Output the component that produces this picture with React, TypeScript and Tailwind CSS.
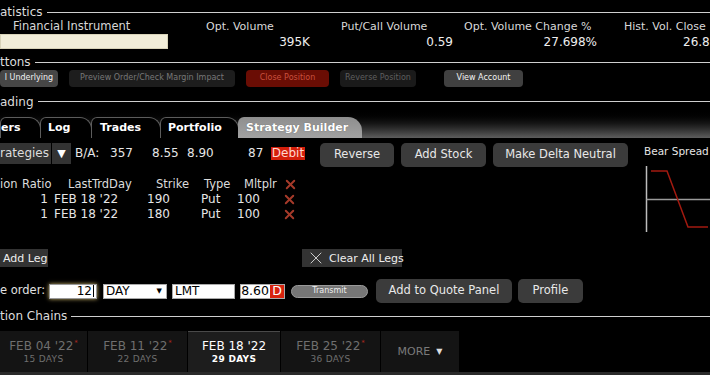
import { X } from 'lucide-react'

function SectionLine({ label }: { label: string }) {
  return (
    <div className="flex items-center h-[14px] text-[12px] text-[#dcdcdc]">
      <span className="whitespace-nowrap">{label}</span>
      <div className="flex-1 h-px bg-[#cfcfcf] ml-[4px]" />
    </div>
  )
}

const statCols = [
  { label: 'Opt. Volume', value: '395K', w: 'w-[147px]', lp: 'pl-[38px]', vp: 'pr-[5px] justify-end' },
  { label: 'Put/Call Volume', value: '0.59', w: 'w-[143px]', lp: 'pl-[26px]', vp: 'pr-[5px] justify-end' },
  { label: 'Opt. Volume Change %', value: '27.698%', w: 'w-[142px]', lp: 'pl-[6px]', vp: 'pr-[3px] justify-end' },
  { label: 'Hist. Vol. Close', value: '26.8', w: 'w-[130px]', lp: 'pl-[24px]', vp: 'pl-[83px]' },
]

const actionButtons = [
  { label: 'l Underlying', cls: 'w-[58px] bg-[#464646] text-[#f0f0f0]', ml: 'ml-0' },
  { label: 'Preview Order/Check Margin Impact', cls: 'w-[166px] bg-[#1d1d1d] text-[#777]', ml: 'ml-[11px]' },
  { label: 'Close Position', cls: 'w-[83px] bg-[#6a0d04] text-[#c9503e]', ml: 'ml-[11px]' },
  { label: 'Reverse Position', cls: 'w-[76px] bg-[#1a1a1a] text-[#5e5e5e]', ml: 'ml-[11px]' },
  { label: 'View Account', cls: 'w-[79px] bg-[#404040] text-[#f2f2f2]', ml: 'ml-[28px]' },
]

const tabs = [
  { label: 'ers', w: 'w-[41px]', pl: 'pl-0' },
  { label: 'Log', w: 'w-[52px]', pl: 'pl-[7px]' },
  { label: 'Trades', w: 'w-[70px]', pl: 'pl-[8px]' },
  { label: 'Portfolio', w: 'w-[79px]', pl: 'pl-[7px]' },
]

const legs = [
  { ratio: '1', day: "FEB 18 '22", strike: '190', type: 'Put', mult: '100' },
  { ratio: '1', day: "FEB 18 '22", strike: '180', type: 'Put', mult: '100' },
]

const expiries = [
  { date: "FEB 04 '22", days: '15 DAYS', w: 'w-[87px]', star: true },
  { date: "FEB 11 '22", days: '22 DAYS', w: 'w-[99px]', star: true },
  { date: "FEB 18 '22", days: '29 DAYS', w: 'w-[92px]', star: false, active: true },
  { date: "FEB 25 '22", days: '36 DAYS', w: 'w-[99px]', star: true },
]

const btn = 'h-[24px] rounded-[5px] bg-[#3b3b3b] flex items-center justify-center text-[11.5px] text-[#e8e8e8] whitespace-nowrap shrink-0'

function RedX() {
  return <X size={15} strokeWidth={3} className="text-[#a63a2a] shrink-0" />
}

export default function App() {
  return (
    <div className="w-[710px] h-[375px] bg-black overflow-hidden text-[#e2e2e2] text-[11px] leading-none flex flex-col font-['DejaVu_Sans','Liberation_Sans',sans-serif]">
      {/* statistics */}
      <div className="mt-[5px]">
        <SectionLine label="atistics" />
      </div>
      <div className="flex">
        <div className="w-[168px] shrink-0">
          <div className="h-[15px] flex items-center pl-[13px] text-[11.5px] text-[#d8d8d8] whitespace-nowrap">Financial Instrument</div>
          <div className="h-[15px] bg-[#f1edd8] border border-[#d8d3b8] mb-[1px]" />
        </div>
        {statCols.map((c) => (
          <div key={c.label} className={`${c.w} shrink-0`}>
            <div className={`h-[15px] flex items-center whitespace-nowrap text-[#d8d8d8] ${c.lp}`}>{c.label}</div>
            <div className={`h-[15px] flex items-center whitespace-nowrap text-[12px] text-[#eee] ${c.vp}`}>{c.value}</div>
          </div>
        ))}
      </div>

      {/* buttons */}
      <div className="mt-[5px]">
        <SectionLine label="ttons" />
      </div>
      <div className="flex mt-[1px] h-[17px]">
        {actionButtons.map((b) => (
          <div
            key={b.label}
            className={`${b.ml} ${b.cls} shrink-0 h-full rounded-[4px] flex items-center justify-center text-[8px] whitespace-nowrap`}
          >
            {b.label}
          </div>
        ))}
      </div>

      {/* trading */}
      <div className="mt-[8px]">
        <SectionLine label="ading" />
      </div>
      <div className="h-[29px] flex items-end bg-linear-to-b from-black via-[#161616] to-[#5e5e5e]">
        {tabs.map((t) => (
          <div
            key={t.label}
            className={`${t.w} ${t.pl} shrink-0 h-[21px] -mr-px bg-black border-t border-l border-r border-[#5c5c5c] rounded-tl-[6px] rounded-tr-[12px] flex items-center text-[11px] font-bold text-white`}
          >
            {t.label}
          </div>
        ))}
        <div className="w-[124px] shrink-0 h-[21px] bg-linear-to-b from-[#8e8e8e] to-[#a2a2a2] rounded-tl-[6px] rounded-tr-[14px] pl-[8px] flex items-center text-[11px] font-bold text-white [text-shadow:0_0_1px_#555]">
          Strategy Builder
        </div>
      </div>

      {/* strategy builder body */}
      <div className="flex h-[100px]">
        <div className="w-[642px] shrink-0">
          <div className="flex items-start mt-[5px] h-[24px]">
            <div className="w-[51px] shrink-0 h-[21px] bg-[#333] flex items-center text-[12px] text-[#ddd]">rategies</div>
            <div className="ml-[1px] shrink-0 w-[19px] h-[21px] bg-[#333] flex items-center justify-center text-[11px] text-white">▼</div>
            <div className="h-[21px] flex items-center text-[12px] text-[#e6e6e6] whitespace-nowrap shrink-0">
              <span className="w-[39px] pl-[4px]">B/A:</span>
              <span className="w-[42px]">357</span>
              <span className="w-[35px]">8.55</span>
              <span className="w-[61px]">8.90</span>
              <span className="w-[23px]">87</span>
              <span className="w-[34px] h-[13px] bg-[#d41f0b] text-[#ffd8d0] flex items-center justify-center">Debit</span>
            </div>
            <div className={`ml-[15px] w-[74px] ${btn}`}>Reverse</div>
            <div className={`ml-[7px] w-[85px] ${btn}`}>Add Stock</div>
            <div className={`ml-[7px] w-[135px] ${btn}`}>Make Delta Neutral</div>
          </div>

          <div className="mt-[11px] flex items-center h-[14px] text-[11.5px] text-[#dcdcdc] whitespace-nowrap">
            <span className="w-[20px] shrink-0">ion</span>
            <span className="w-[48px] shrink-0 pl-[2px]">Ratio</span>
            <span className="w-[88px] shrink-0">LastTrdDay</span>
            <span className="w-[48px] shrink-0">Strike</span>
            <span className="w-[40px] shrink-0">Type</span>
            <span className="w-[41px] shrink-0">Mltplr</span>
            <span className="w-[10px] flex justify-center"><RedX /></span>
          </div>
          {legs.map((l) => (
            <div key={l.strike} className="flex items-center h-[15px] text-[12px] text-[#e6e6e6] whitespace-nowrap">
              <span className="w-[48px] shrink-0 text-right">{l.ratio}</span>
              <span className="w-[99px] shrink-0 pl-[6px]">{l.day}</span>
              <span className="w-[54px] shrink-0">{l.strike}</span>
              <span className="w-[36px] shrink-0">{l.type}</span>
              <span className="w-[44px] shrink-0">{l.mult}</span>
              <span className="w-[16px] flex justify-center"><RedX /></span>
            </div>
          ))}
        </div>
        <div className="flex-1 pl-[2px] min-w-0">
          <div className="mt-[6px] h-[14px] flex items-center text-[10.5px] text-[#e6e6e6] whitespace-nowrap">Bear Spread</div>
          <svg width="68" height="72" viewBox="2 0 68 72" className="mt-[6px]">
            <line x1="4.5" y1="2" x2="4.5" y2="68" stroke="#bdbdbd" strokeWidth="1.5" />
            <line x1="4.5" y1="35.5" x2="70" y2="35.5" stroke="#9a9a9a" strokeWidth="1.5" />
            <polyline points="9,7 25,7 46,63 66,63" fill="none" stroke="#a21a10" strokeWidth="1.5" />
          </svg>
        </div>
      </div>

      {/* legs actions */}
      <div className="flex mt-[12px] h-[18px]">
        <div className="w-[48px] shrink-0 bg-[#333] flex items-center pl-[3px] text-[11px] text-[#eee] whitespace-nowrap">Add Leg</div>
        <div className="ml-[254px] shrink-0 w-[100px] bg-[#333] flex items-center pl-[4px] gap-[3px] text-[11px] text-[#eee] whitespace-nowrap">
          <X size={20} strokeWidth={1.2} className="text-[#ccc] shrink-0" />
          Clear All Legs
        </div>
      </div>

      {/* order row */}
      <div className="flex items-center mt-[12px] h-[24px] whitespace-nowrap">
        <span className="w-[49px] shrink-0 text-[11.5px] text-[#e0e0e0]">e order:</span>
        <div className="w-[48px] shrink-0 h-[15px] bg-white border border-[#999] shadow-[0_0_4px_#c9b26a] flex items-center justify-end pr-[2px] text-[12px] text-black">
          12<span className="ml-[1px] w-px h-[12px] bg-black" />
        </div>
        <div className="ml-[6px] shrink-0 w-[64px] h-[15px] bg-white border border-[#aaa] flex items-center justify-between px-[2px] text-[12px] text-black">
          DAY<span className="text-[7px] mr-[2px]">▼</span>
        </div>
        <div className="ml-[5px] shrink-0 w-[63px] h-[15px] bg-white border border-[#aaa] flex items-center px-[2px] text-[12px] text-black">LMT</div>
        <div className="ml-[5px] shrink-0 w-[45px] h-[15px] bg-white border border-[#aaa] flex items-center text-[12.5px] text-black">
          <span className="flex-1 text-right pr-[1px]">8.60</span>
          <span className="w-[14px] h-full bg-[#d8230e] text-white flex items-center justify-center">D</span>
        </div>
        <div className="ml-[6px] shrink-0 w-[77px] h-[13px] rounded-full bg-[#767676] border border-[#9a9a9a] flex items-center justify-center text-[8px] text-[#eee]">Transmit</div>
        <div className={`ml-[8px] w-[136px] ${btn}`}>Add to Quote Panel</div>
        <div className={`ml-[6px] w-[65px] ${btn}`}>Profile</div>
      </div>

      {/* option chains */}
      <div className="mt-[6px]">
        <SectionLine label="tion Chains" />
      </div>
      <div className="flex mt-[8px] h-[41px]">
        {expiries.map((e) => (
          <div
            key={e.date}
            className={`${e.w} shrink-0 mr-px flex flex-col items-center justify-center ${
              e.active ? 'bg-[#1d1d1d] border-t border-[#4a4a4a] text-white' : 'bg-[#141414] text-[#6f6f6f]'
            }`}
          >
            <div className="text-[12px] whitespace-nowrap flex items-start">
              {e.date}
              {e.star && <span className="text-[7px] text-[#b02a20] ml-px">*</span>}
            </div>
            <div className={`mt-[3px] text-[9px] tracking-[0.3px] whitespace-nowrap ${e.active ? 'font-bold' : ''}`}>{e.days}</div>
          </div>
        ))}
        <div className="w-[78px] shrink-0 bg-[#141414] flex items-center justify-center gap-[6px] text-[11px] text-[#7a7a7a]">
          MORE <span className="text-[8px] text-[#ddd]">▼</span>
        </div>
      </div>
      <div className="h-[3px] bg-[#2a2a2a]" />
    </div>
  )
}
